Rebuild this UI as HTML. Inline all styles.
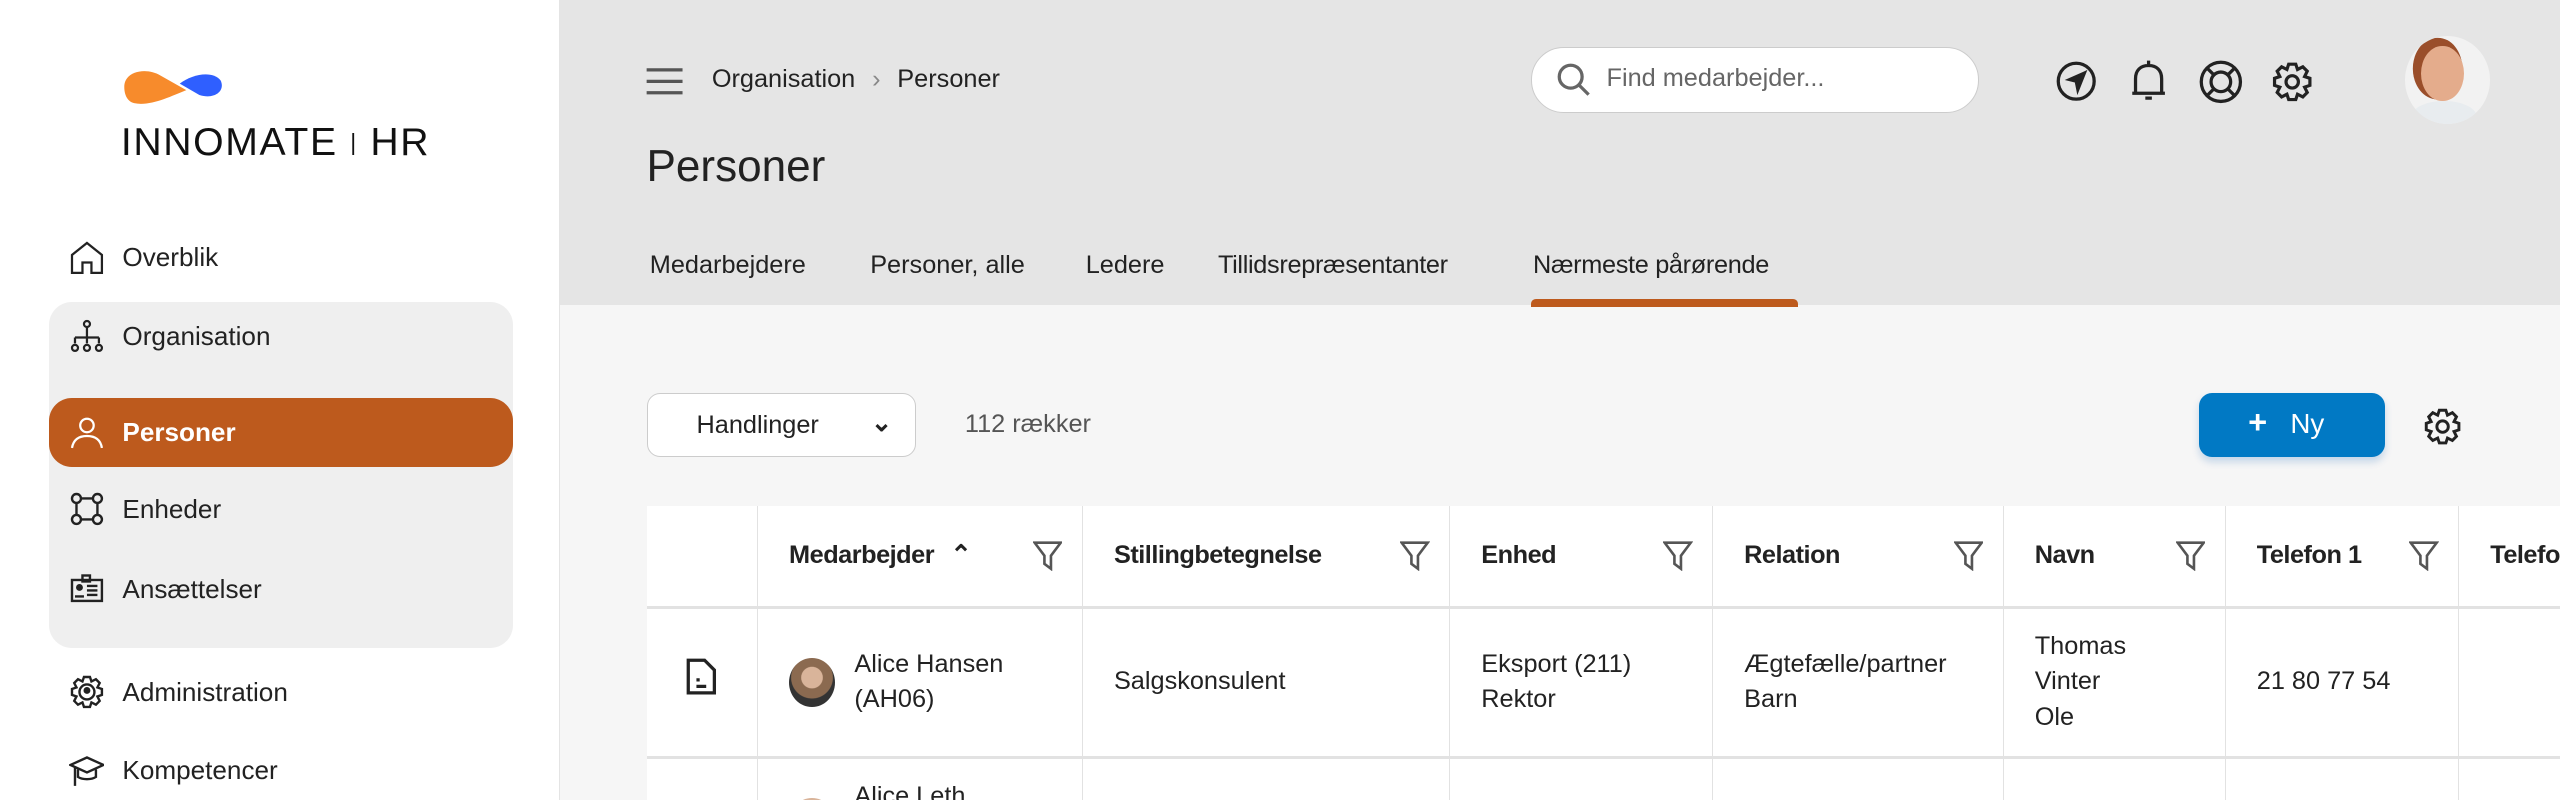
<!DOCTYPE html>
<html><head><meta charset="utf-8"><style>
*{box-sizing:border-box;margin:0;padding:0}
html,body{width:2560px;height:800px;overflow:hidden;background:#f6f6f6}
#z{zoom:1.63265;width:1568px;height:490px;position:relative;font-family:"Liberation Sans",sans-serif;color:#222;font-size:15px;overflow:hidden}
.side{position:absolute;left:0;top:0;width:343px;height:490px;background:#fff;border-right:1px solid #e4e4e4}
.grp{position:absolute;left:30px;top:185px;width:284px;height:212px;background:#efefef;border-radius:14px}
.nav{position:absolute;left:42px;display:flex;align-items:center;height:24px;font-size:16px;color:#222}
.nav svg{width:22px;height:22px;margin-right:11px}
.hdr{position:absolute;left:343px;top:0;right:0;height:187px;background:#e5e5e5}
.a{position:absolute}
.tab{position:absolute;top:154px;font-size:15.5px;color:#222}
table{position:absolute;left:396px;top:310px;border-collapse:collapse;background:#fff;table-layout:fixed;width:1200px}
td{border:1px solid #e2e2e2;border-top:none;vertical-align:middle;padding:0 19px;font-size:15.5px;line-height:22px;overflow:hidden;white-space:nowrap}
tr.h td{height:62px;font-weight:bold;border-bottom:2px solid #e2e2e2;letter-spacing:-0.3px}
tr.r td{height:92px;border-bottom:2px solid #e2e2e2}
.fl{float:right;margin-top:2px}
</style></head><body><div id="z">
<div class="side">
 <svg class="a" style="left:74px;top:39px" width="64" height="28" viewBox="0 0 64 28"><path d="M2 14C2 4 16 2 24 7L40 16C30 20 18 26 8 24C4 23 2 19 2 14Z" fill="#f78b2c"/><path d="M36 12C44 6 56 4 61 10C64 16 58 22 48 19Z" fill="#2f5fff"/></svg>
 <div class="a" style="left:74px;top:74px;font-size:24px;letter-spacing:1px;color:#111">INNOMATE <span style="font-size:14px;position:relative;top:-3px">|</span> HR</div>
 <div class="grp"></div>
 <div class="a" style="left:30px;top:244px;width:284px;height:42px;background:#bd5a1d;border-radius:14px"></div>
 <div class="nav" style="top:146px"><svg viewBox="0 0 24 24" fill="none" stroke="#222" stroke-width="1.5"><path d="M2 22V10L12 2L22 10V22H15V15H9V22Z"/></svg>Overblik</div>
 <div class="nav" style="top:194px"><svg viewBox="0 0 24 24" fill="none" stroke="#222" stroke-width="1.5"><circle cx="12" cy="4" r="2"/><path d="M12 6V13M4 13H20M4 13V17M12 13V17M20 13V17"/><circle cx="4" cy="20" r="2"/><circle cx="12" cy="20" r="2"/><circle cx="20" cy="20" r="2"/></svg>Organisation</div>
 <div class="nav" style="top:253px;color:#fff;font-weight:bold"><svg viewBox="0 0 24 24" fill="none" stroke="#fff" stroke-width="1.5"><circle cx="12" cy="7" r="4.5"/><path d="M2 22C3 16 7 14 12 14S21 16 22 22"/></svg>Personer</div>
 <div class="nav" style="top:300px"><svg viewBox="0 0 24 24" fill="none" stroke="#222" stroke-width="1.6"><circle cx="5" cy="5" r="3"/><circle cx="19" cy="5" r="3"/><circle cx="5" cy="19" r="3"/><circle cx="19" cy="19" r="3"/><path d="M8 5H16M8 19H16M5 8V16M19 8V16"/></svg>Enheder</div>
 <div class="nav" style="top:349px"><svg viewBox="0 0 24 24" fill="none" stroke="#222" stroke-width="1.6"><rect x="2" y="6" width="20" height="14"/><rect x="9" y="3" width="5" height="4"/><circle cx="7" cy="11" r="1.5" fill="#222"/><path d="M4 17H10M12 10H19M12 13H19M12 16H19"/></svg>Ansættelser</div>
 <div class="nav" style="top:412px"><svg viewBox="0 0 24 24" fill="none" stroke="#222" stroke-width="1.6"><path d="M10 2H14L15 5L18 3.5L20.5 6L19 9L22 10V14L19 15L20.5 18L18 20.5L15 19L14 22H10L9 19L6 20.5L3.5 18L5 15L2 14V10L5 9L3.5 6L6 3.5L9 5Z"/><circle cx="12" cy="12" r="5"/><circle cx="12" cy="11" r="1.5" fill="#222"/></svg>Administration</div>
 <div class="nav" style="top:460px"><svg viewBox="0 0 24 24" fill="none" stroke="#222" stroke-width="1.6"><path d="M1 8L12 3L23 8L12 13Z"/><path d="M6 11V16C9 18 15 18 18 16V11M4 9V22"/></svg>Kompetencer</div>
</div>
<div class="hdr">
 <svg class="a" style="left:52px;top:40px" width="24" height="20" viewBox="0 0 24 20" stroke="#555" stroke-width="2"><path d="M1 3H23M1 10H23M1 17H23"/></svg>
 <div class="a" style="left:93px;top:40px;font-size:15.5px">Organisation <span style="color:#888;margin:0 6px">›</span> Personer</div>
 <div class="a" style="left:53px;top:87px;font-size:27px">Personer</div>
 <div class="a" style="left:595px;top:29px;width:274px;height:40px;background:#fff;border:1px solid #ccc;border-radius:20px"></div>
 <svg class="a" style="left:610px;top:38px" width="22" height="22" viewBox="0 0 22 22" fill="none" stroke="#666" stroke-width="2"><circle cx="9" cy="9" r="7"/><path d="M14 14L20 20"/></svg>
 <div class="a" style="left:641px;top:39px;font-size:15.5px;color:#666">Find medarbejder...</div>
 <svg class="a" style="left:916px;top:37px" width="26" height="26" viewBox="0 0 26 26" fill="none" stroke="#222" stroke-width="2"><circle cx="13" cy="13" r="11"/><path d="M18 8L9 12L13 13L14 18Z" fill="#222"/></svg>
 <svg class="a" style="left:961px;top:36px" width="24" height="28" viewBox="0 0 24 28" fill="none" stroke="#222" stroke-width="2"><path d="M4 21V12C4 7 7 4 12 4S20 7 20 12V21H4ZM2 21H22M10 24H14M12 1V4"/></svg>
 <svg class="a" style="left:1003px;top:36px" width="28" height="28" viewBox="0 0 28 28" fill="none" stroke="#222" stroke-width="2"><circle cx="14" cy="14" r="12"/><circle cx="14" cy="14" r="6"/><path d="M6 6L10 10M22 6L18 10M6 22L10 18M22 22L18 18"/></svg>
 <svg class="a" style="left:1048px;top:36px" width="26" height="28" viewBox="0 0 24 24" fill="none" stroke="#222" stroke-width="1.8"><path d="M10 2H14L15 5L18 3.5L20.5 6L19 9L22 10V14L19 15L20.5 18L18 20.5L15 19L14 22H10L9 19L6 20.5L3.5 18L5 15L2 14V10L5 9L3.5 6L6 3.5L9 5Z"/><circle cx="12" cy="12" r="3.5"/></svg>
 <div class="a" style="left:1130px;top:22px;width:52px;height:54px;border-radius:50%;background:#f2f2f2;overflow:hidden"><div style="position:absolute;left:10px;top:6px;width:26px;height:34px;border-radius:50%;background:#e4ac8c;box-shadow:-3px -3px 0 2px #9a4e2a"></div><div style="position:absolute;left:4px;top:40px;width:40px;height:20px;border-radius:50% 50% 0 0;background:#e8ecef"></div></div>
 <div class="tab" style="left:55px">Medarbejdere</div>
 <div class="tab" style="left:190px">Personer, alle</div>
 <div class="tab" style="left:322px">Ledere</div>
 <div class="tab" style="left:403px;letter-spacing:-0.2px">Tillidsrepræsentanter</div>
 <div class="tab" style="left:596px;letter-spacing:-0.2px">Nærmeste pårørende</div>
 <div class="a" style="left:595px;top:183px;width:163px;height:5px;background:#bd5a1d;border-radius:3px 3px 0 0"></div>
</div>
<div class="a" style="left:396px;top:241px;width:165px;height:39px;background:#fff;border:1px solid #ccc;border-radius:8px;font-size:15.5px;padding:10px 0 0 30px">Handlinger <span style="position:absolute;right:14px;top:8px;font-weight:bold">⌄</span></div>
<div class="a" style="left:591px;top:251px;font-size:15.5px;color:#555">112 rækker</div>
<div class="a" style="left:1347px;top:241px;width:114px;height:39px;background:#0179c4;border-radius:8px;color:#fff;font-size:17px;padding:9px 0 0 30px;box-shadow:0 3px 5px rgba(0,90,180,.2)"><b style="font-size:20px;line-height:17px">+</b>&nbsp;&nbsp; Ny</div>
<svg class="a" style="left:1484px;top:249px" width="24" height="24" viewBox="0 0 24 24" fill="none" stroke="#222" stroke-width="1.8"><path d="M10 2H14L15 5L18 3.5L20.5 6L19 9L22 10V14L19 15L20.5 18L18 20.5L15 19L14 22H10L9 19L6 20.5L3.5 18L5 15L2 14V10L5 9L3.5 6L6 3.5L9 5Z"/><circle cx="12" cy="12" r="3.5"/></svg>
<table>
<colgroup><col style="width:68px"><col style="width:199px"><col style="width:225px"><col style="width:161px"><col style="width:178px"><col style="width:136px"><col style="width:143px"><col style="width:90px"></colgroup>
<tr class="h"><td style="border-left:none"></td><td style="padding-right:12px">Medarbejder <span style="margin-left:6px">⌃</span><svg class="fl" width="18" height="18" viewBox="0 0 18 18" fill="none" stroke="#555" stroke-width="1.6"><path d="M1 1H17L11 9V17L7 14V9Z"/></svg></td><td style="padding-right:12px">Stillingbetegnelse<svg class="fl" width="18" height="18" viewBox="0 0 18 18" fill="none" stroke="#555" stroke-width="1.6"><path d="M1 1H17L11 9V17L7 14V9Z"/></svg></td><td style="padding-right:12px">Enhed<svg class="fl" width="18" height="18" viewBox="0 0 18 18" fill="none" stroke="#555" stroke-width="1.6"><path d="M1 1H17L11 9V17L7 14V9Z"/></svg></td><td style="padding-right:12px">Relation<svg class="fl" width="18" height="18" viewBox="0 0 18 18" fill="none" stroke="#555" stroke-width="1.6"><path d="M1 1H17L11 9V17L7 14V9Z"/></svg></td><td style="padding-right:12px">Navn<svg class="fl" width="18" height="18" viewBox="0 0 18 18" fill="none" stroke="#555" stroke-width="1.6"><path d="M1 1H17L11 9V17L7 14V9Z"/></svg></td><td style="padding-right:12px">Telefon 1<svg class="fl" width="18" height="18" viewBox="0 0 18 18" fill="none" stroke="#555" stroke-width="1.6"><path d="M1 1H17L11 9V17L7 14V9Z"/></svg></td><td style="border-right:none">Telefon</td></tr>
<tr class="r"><td style="border-left:none;text-align:center"><svg width="20" height="24" viewBox="0 0 20 24" fill="none" stroke="#222" stroke-width="2"><path d="M2 2H12L18 8V22H2Z"/><path d="M7 14H9M7 18H13"/></svg></td><td><div style="display:flex;align-items:center"><div style="width:28px;height:30px;border-radius:50%;background:radial-gradient(circle at 50% 40%,#d9b49a 0 28%,#8b6a50 30% 55%,#333 57%);margin-right:12px;flex:none"></div><div>Alice Hansen<br>(AH06)</div></div></td><td>Salgskonsulent</td><td>Eksport (211)<br>Rektor</td><td>Ægtefælle/partner<br>Barn</td><td>Thomas<br>Vinter<br>Ole</td><td>21 80 77 54</td><td style="border-right:none"></td></tr>
<tr><td style="height:30px;border-left:none"></td><td style="vertical-align:top;padding-top:12px"><div style="display:flex"><div style="width:28px;height:30px;border-radius:50%;background:#d9b49a;margin:12px 12px 0 0"></div>Alice Leth</div></td><td></td><td></td><td></td><td></td><td></td><td style="border-right:none"></td></tr>
</table>
</div></body></html>
